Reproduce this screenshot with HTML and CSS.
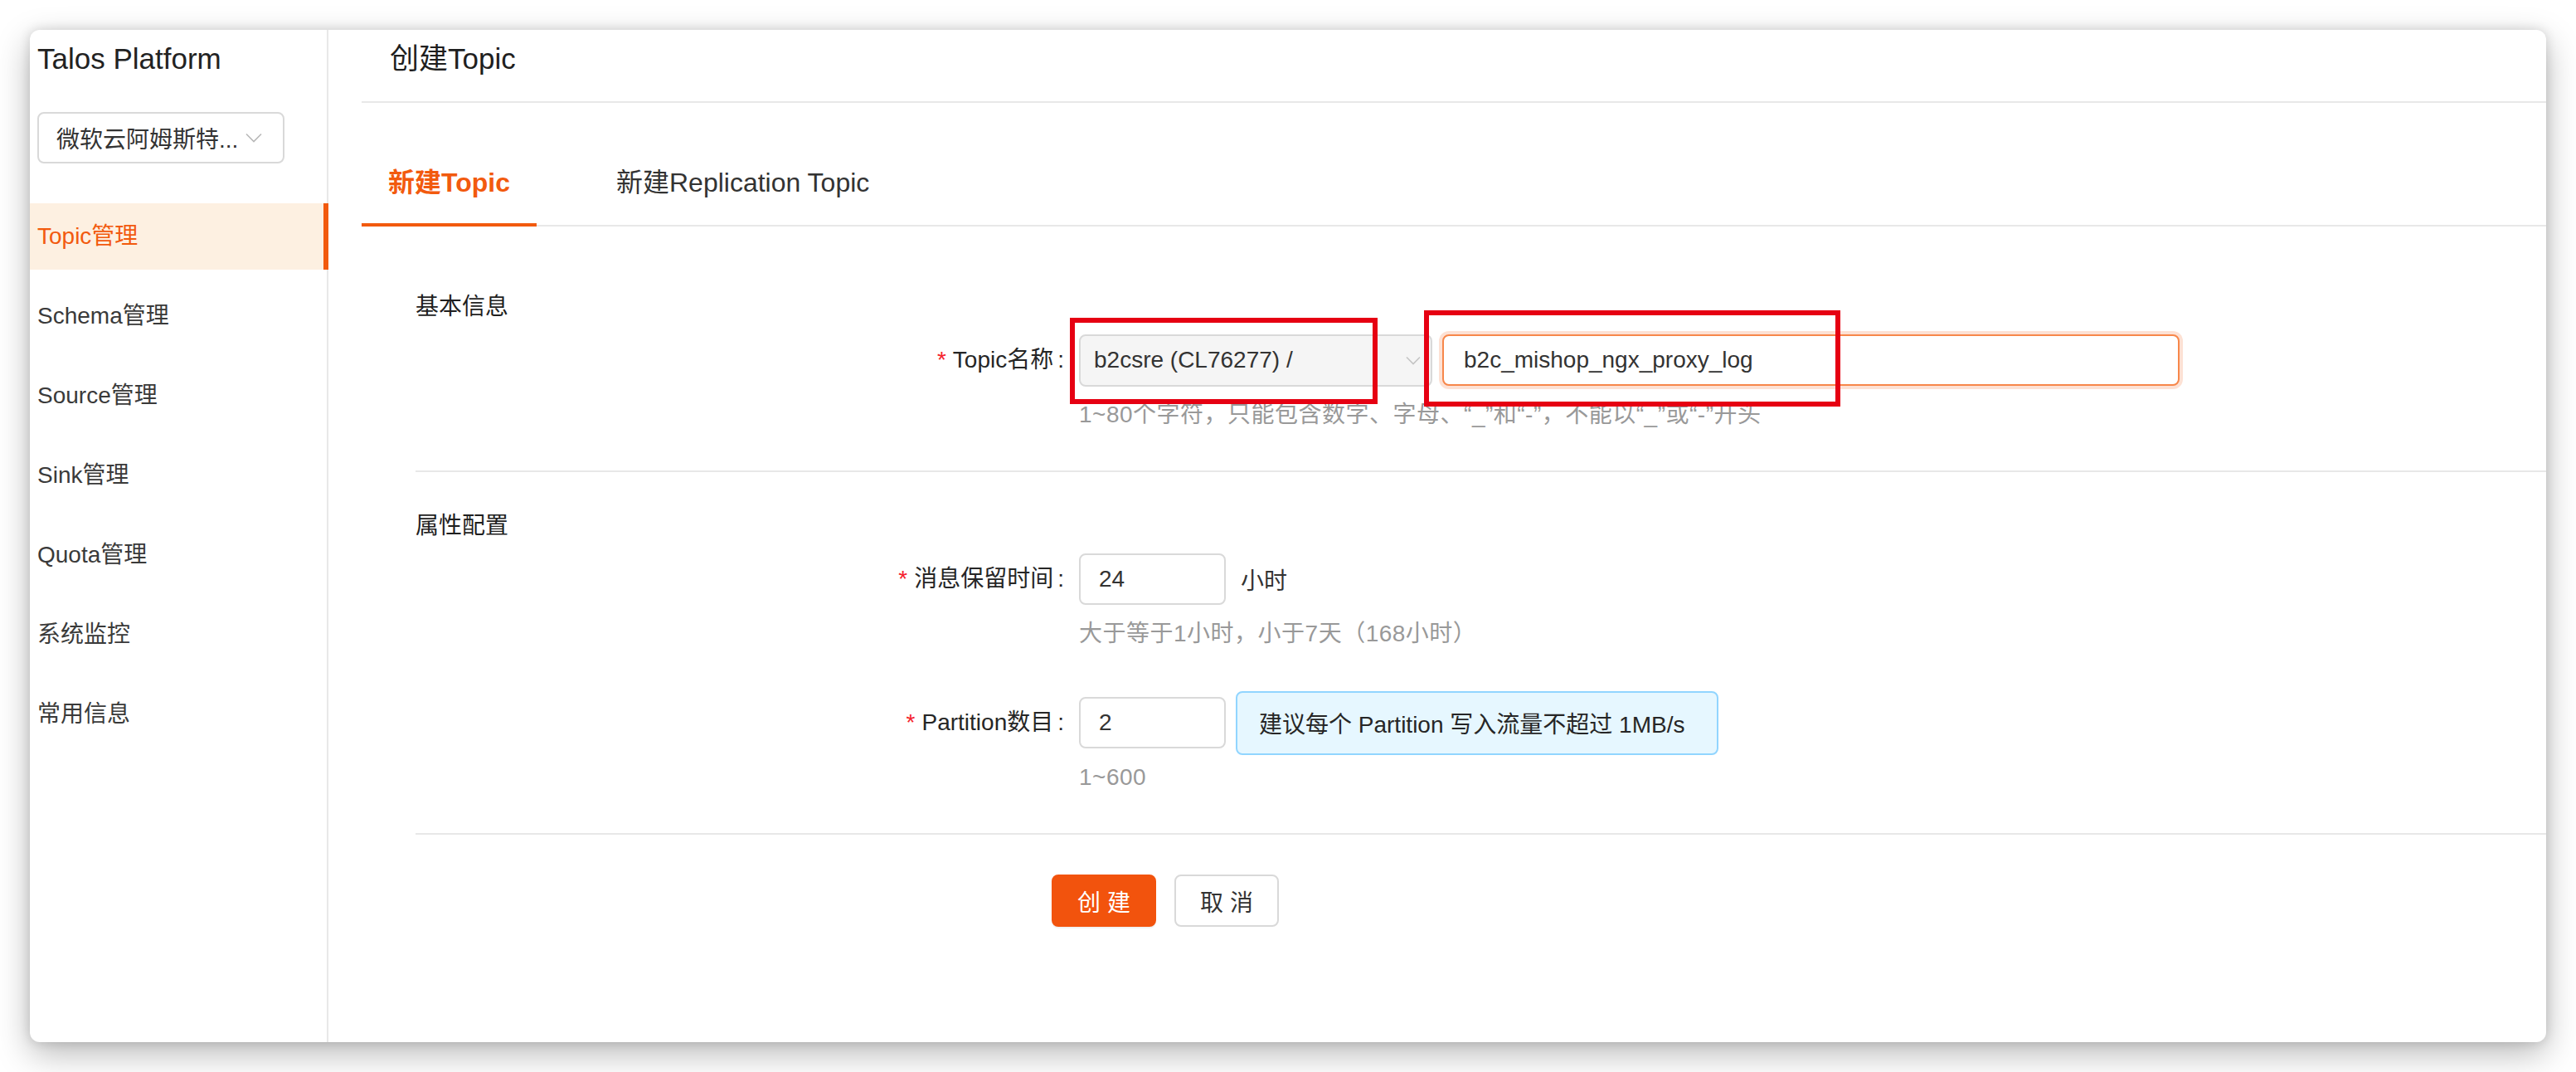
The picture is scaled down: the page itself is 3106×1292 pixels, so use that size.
FILE: index.html
```html
<!DOCTYPE html>
<html lang="zh-CN">
<head>
<meta charset="utf-8">
<title>Talos Platform - 创建Topic</title>
<link rel="stylesheet" href="styles.css">
</head>
<body>
<div class="window">
  <aside class="sidebar">
    <div class="brand">Talos Platform</div>
    <div class="cluster-select">
      <span>微软云阿姆斯特...</span>
      <svg class="chevron" width="20" height="12" viewBox="0 0 20 12"><polyline points="1,1.5 10,10.5 19,1.5" fill="none" stroke="#b8b8b8" stroke-width="1.6"/></svg>
    </div>
    <ul class="menu">
      <li class="menu-item active">Topic管理</li>
      <li class="menu-item">Schema管理</li>
      <li class="menu-item">Source管理</li>
      <li class="menu-item">Sink管理</li>
      <li class="menu-item">Quota管理</li>
      <li class="menu-item">系统监控</li>
      <li class="menu-item">常用信息</li>
    </ul>
  </aside>
  <main class="main">
    <header class="page-header"><h1>创建Topic</h1></header>
    <nav class="tabs">
      <div class="tab active">新建Topic</div>
      <div class="tab">新建Replication Topic</div>
    </nav>
    <div class="form">
      <section class="section">
        <div class="section-title">基本信息</div>
        <div class="form-item">
          <div class="form-label"><span class="req">*</span>Topic名称<span class="colon">:</span></div>
          <div class="form-control">
            <div class="control-line">
              <div class="select">
                <span>b2csre (CL76277) /</span>
                <svg class="chevron" width="18" height="11" viewBox="0 0 18 11"><polyline points="1,1.5 9,9.5 17,1.5" fill="none" stroke="#c4c4c4" stroke-width="1.6"/></svg>
              </div>
              <div class="input topic-name">b2c_mishop_ngx_proxy_log</div>
            </div>
            <div class="help">1~80个字符，只能包含数字、字母、“_”和“-”，不能以“_”或“-”开头</div>
          </div>
        </div>
      </section>
      <section class="section">
        <div class="section-title">属性配置</div>
        <div class="form-item">
          <div class="form-label"><span class="req">*</span>消息保留时间<span class="colon">:</span></div>
          <div class="form-control">
            <div class="control-line">
              <div class="input short">24</div>
              <span class="suffix">小时</span>
            </div>
            <div class="help">大于等于1小时，小于7天（168小时）</div>
          </div>
        </div>
        <div class="form-item">
          <div class="form-label"><span class="req">*</span>Partition数目<span class="colon">:</span></div>
          <div class="form-control">
            <div class="control-line">
              <div class="input short">2</div>
              <div class="alert">建议每个 Partition 写入流量不超过 1MB/s</div>
            </div>
            <div class="help">1~600</div>
          </div>
        </div>
      </section>
      <div class="actions">
        <button class="btn btn-primary" type="button">创 建</button>
        <button class="btn" type="button">取 消</button>
      </div>
    </div>
  </main>
  <div class="annot annot-1"></div>
  <div class="annot annot-2"></div>
</div>
</body>
</html>
```
FILE: styles.css
```css
* { box-sizing: border-box; }
html, body { margin: 0; padding: 0; background: #fff; }
body {
  font-family: "Liberation Sans", "Noto Sans CJK SC", sans-serif;
  color: #262626;
}
.window {
  position: relative;
  margin: 36px;
  width: 3034px;
  height: 1220px;
  background: #fff;
  border-radius: 12px;
  box-shadow: 0 14px 40px rgba(0,0,0,0.28), 0 0 14px rgba(0,0,0,0.14);
  display: flex;
}

/* Sidebar */
.sidebar {
  width: 360px;
  flex: none;
  border-right: 2px solid #e8e8e8;
  padding-top: 10px;
}
.brand {
  margin-left: 9px;
  font-size: 35px;
  line-height: 50px;
  color: #222;
}
.cluster-select {
  margin: 39px 0 0 9px;
  width: 298px;
  height: 62px;
  border: 2px solid #d9d9d9;
  border-radius: 8px;
  display: flex;
  align-items: center;
  justify-content: space-between;
  padding: 0 25px 0 21px;
  font-size: 28px;
  color: #333;
}
.chevron { display: block; flex: none; }
.menu {
  list-style: none;
  margin: 48px 0 0;
  padding: 0;
}
.menu-item {
  height: 80px;
  line-height: 80px;
  margin-bottom: 16px;
  padding-left: 9px;
  font-size: 28px;
  color: #3a3a3a;
}
.menu-item.active {
  background: #fdf0e1;
  color: #f25a0e;
  margin-right: -2px;
  border-right: 6px solid #f25a0e;
}

/* Main */
.main {
  flex: 1;
  min-width: 0;
  padding-left: 40px;
}
.page-header {
  height: 88px;
  border-bottom: 2px solid #e8e8e8;
  padding-left: 34px;
}
.page-header h1 {
  margin: 0;
  font-size: 35px;
  font-weight: normal;
  line-height: 70px;
  color: #1f1f1f;
}
.tabs {
  display: flex;
  margin-top: 48px;
  border-bottom: 2px solid #e8e8e8;
}
.tab {
  padding: 0 32px;
  margin-right: 64px;
  margin-bottom: -2px;
  font-size: 32px;
  line-height: 97px;
  border-bottom: 4px solid transparent;
  color: #333;
}
.tab.active {
  color: #f25a0e;
  border-bottom-color: #f25a0e;
  font-weight: 600;
}

/* Form */
.form {
  padding-left: 65px;
  padding-top: 32px;
}
.section {
  padding-top: 45px;
  border-bottom: 2px solid #e8e8e8;
}
.section-title {
  font-size: 28px;
  line-height: 40px;
  margin-bottom: 4px;
  color: #1f1f1f;
}
.form-item {
  display: grid;
  grid-template-columns: 800px 1fr;
  margin-bottom: 47px;
}
.form-label {
  text-align: right;
  padding-right: 18px;
  font-size: 28px;
  line-height: 80px;
  color: #262626;
  white-space: nowrap;
}
.req {
  color: #f5222d;
  margin-right: 8px;
}
.colon { margin-left: 5px; }
.control-line {
  display: flex;
  align-items: center;
  min-height: 80px;
}
.select {
  width: 426px;
  height: 63px;
  background: #f5f5f5;
  border: 2px solid #d9d9d9;
  border-radius: 8px;
  display: flex;
  align-items: center;
  justify-content: space-between;
  padding: 0 12px 0 16px;
  font-size: 28px;
  color: #333;
}
.input {
  height: 62px;
  border: 2px solid #d9d9d9;
  border-radius: 8px;
  padding: 0 22px;
  display: flex;
  align-items: center;
  font-size: 28px;
  color: #333;
  background: #fff;
}
.input.topic-name {
  margin-left: 12px;
  width: 889px;
  padding-left: 24px;
  border-color: #f7874a;
  box-shadow: 0 0 0 4px rgba(242,90,14,0.18);
}
.input.short { width: 177px; }
.suffix {
  margin-left: 18px;
  font-size: 28px;
  color: #333;
}
.alert {
  margin-left: 12px;
  width: 582px;
  height: 77px;
  background: #e6f7ff;
  border: 2px solid #91d5ff;
  border-radius: 8px;
  padding: 0 26px;
  display: flex;
  align-items: center;
  font-size: 28px;
  color: #262626;
}
.help {
  margin-top: 6px;
  line-height: 40px;
  font-size: 28px;
  color: #999;
  letter-spacing: 0.5px;
}
.actions {
  margin-top: 48px;
  padding-left: 767px;
  display: flex;
  gap: 22px;
}
.btn {
  width: 126px;
  height: 63px;
  padding: 0;
  border: 2px solid #d9d9d9;
  border-radius: 8px;
  background: #fff;
  font-family: "Liberation Sans", "Noto Sans CJK SC", sans-serif;
  font-size: 28px;
  color: #333;
}
.btn-primary {
  background: #f2530d;
  border-color: #f2530d;
  color: #fff;
  box-shadow: 0 2px 0 rgba(0,0,0,0.05);
}

/* Red annotation boxes drawn over the form */
.annot {
  position: absolute;
  border: 6px solid #e60012;
  pointer-events: none;
}
.annot-1 { left: 1254px; top: 347px; width: 371px; height: 104px; }
.annot-2 { left: 1681px; top: 338px; width: 502px; height: 116px; }
```
